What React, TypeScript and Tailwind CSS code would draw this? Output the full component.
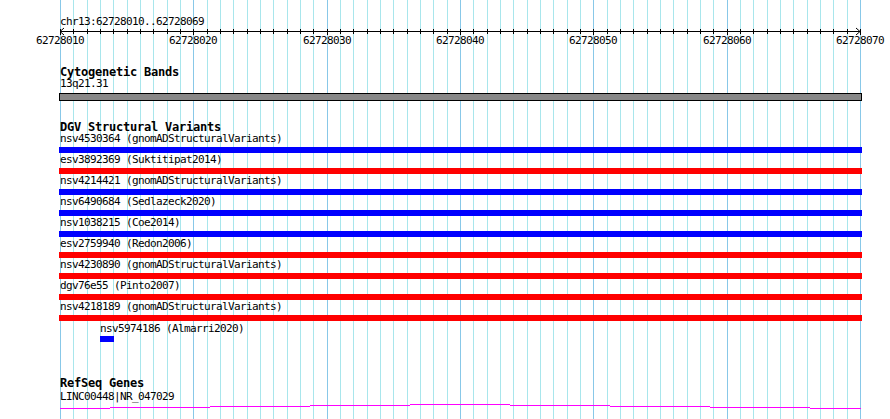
import * as React from "react";

const BASES = 60;
const X0 = 60;
const X1 = 860;
const bx = (i: number) => Math.round(X0 + (i * (X1 - X0)) / BASES);

const variants: { label: string; color: "blue" | "red" }[] = [
  { label: "nsv4530364 (gnomADStructuralVariants)", color: "blue" },
  { label: "esv3892369 (Suktitipat2014)", color: "red" },
  { label: "nsv4214421 (gnomADStructuralVariants)", color: "blue" },
  { label: "nsv6490684 (Sedlazeck2020)", color: "blue" },
  { label: "nsv1038215 (Coe2014)", color: "blue" },
  { label: "esv2759940 (Redon2006)", color: "red" },
  { label: "nsv4230890 (gnomADStructuralVariants)", color: "red" },
  { label: "dgv76e55 (Pinto2007)", color: "red" },
  { label: "nsv4218189 (gnomADStructuralVariants)", color: "red" },
];

// intron line of the gene, drawn as 1px steps like the original image
const geneSteps: [number, number, number][] = [
  [60, 110, 5],
  [110, 210, 4],
  [210, 310, 3],
  [310, 410, 2],
  [410, 510, 1],
  [510, 610, 2],
  [610, 710, 3],
  [710, 810, 4],
  [810, 861, 5],
];

function Grid() {
  return (
    <svg className="absolute inset-0" width={890} height={419} shapeRendering="crispEdges">
      {Array.from({ length: BASES + 1 }, (_, i) => (
        <rect key={i} x={bx(i)} y={0} width={1} height={419} fill={i % 10 === 0 ? "#88c8e8" : "#a8e6ec"} />
      ))}
    </svg>
  );
}

function Ruler() {
  const font = { fontFamily: "'DejaVu Sans Mono', 'Liberation Mono', monospace", fontSize: 11, letterSpacing: "-0.62px" };
  return (
    <svg className="relative block" width={890} height={48} shapeRendering="crispEdges">
      <text x={60} y={25} style={font} fill="#000">
        chr13:62728010..62728069
      </text>
      <rect x={60} y={31} width={801} height={1} fill="#000" />
      {Array.from({ length: BASES + 1 }, (_, i) => (
        <rect key={i} x={bx(i)} y={29} width={1} height={i % 10 === 0 ? 6 : 5} fill="#000" />
      ))}
      <path d="M64 28 L60 31.5 L64 35" stroke="#000" fill="none" shapeRendering="auto" />
      <path d="M856 28 L860 31.5 L856 35" stroke="#000" fill="none" shapeRendering="auto" />
      {[0, 1, 2, 3, 4, 5, 6].map((k) => (
        <text key={k} x={bx(k * 10)} y={44} textAnchor="middle" style={font} fill="#000">
          {62728010 + k * 10}
        </text>
      ))}
    </svg>
  );
}

function TrackTitle({ children }: { children: React.ReactNode }) {
  return <div className="h-[11px] text-[12px] font-bold leading-[11px] tracking-[-0.22px] whitespace-nowrap">{children}</div>;
}

function Label({ children, className = "" }: { children: React.ReactNode; className?: string }) {
  return <div className={`h-[12px] text-[11px] leading-[12px] tracking-[-0.62px] whitespace-nowrap ${className}`}>{children}</div>;
}

export default function App() {
  return (
    <div className="relative h-[419px] w-[890px] overflow-hidden bg-white font-['DejaVu_Sans_Mono','Liberation_Mono',monospace] text-black">
      <Grid />
      <div className="relative">
        <Ruler />

        <div className="pl-[60px] pt-[19px]">
          <TrackTitle>Cytogenetic Bands</TrackTitle>
          <Label>13q21.31</Label>
          <div className="-ml-px mt-[3px] h-[8px] w-[803px] border border-black bg-[#888888]" />
        </div>

        <div className="mt-[21px] pl-[60px]">
          <TrackTitle>DGV Structural Variants</TrackTitle>
          {variants.map((v) => (
            <div key={v.label} className="pb-px">
              <Label>{v.label}</Label>
              <div className={`-ml-px mt-[2px] h-[6px] w-[803px] ${v.color === "blue" ? "bg-[#0000ff]" : "bg-[#ff0000]"}`} />
            </div>
          ))}
          <div className="mt-px pl-[40px]">
            <Label>nsv5974186 (Almarri2020)</Label>
            <div className="mt-px h-[6px] w-[14px] bg-[#0000ff]" />
          </div>
        </div>

        <div className="mt-[36px] pl-[60px]">
          <TrackTitle>RefSeq Genes</TrackTitle>
          <Label className="mt-[2px]">LINC00448|NR_047029</Label>
        </div>
        <svg className="block" width={890} height={8} shapeRendering="crispEdges">
          {geneSteps.map(([a, b, y]) => (
            <rect key={a} x={a} y={y} width={b - a} height={1} fill="#ff00ff" />
          ))}
        </svg>
      </div>
    </div>
  );
}
